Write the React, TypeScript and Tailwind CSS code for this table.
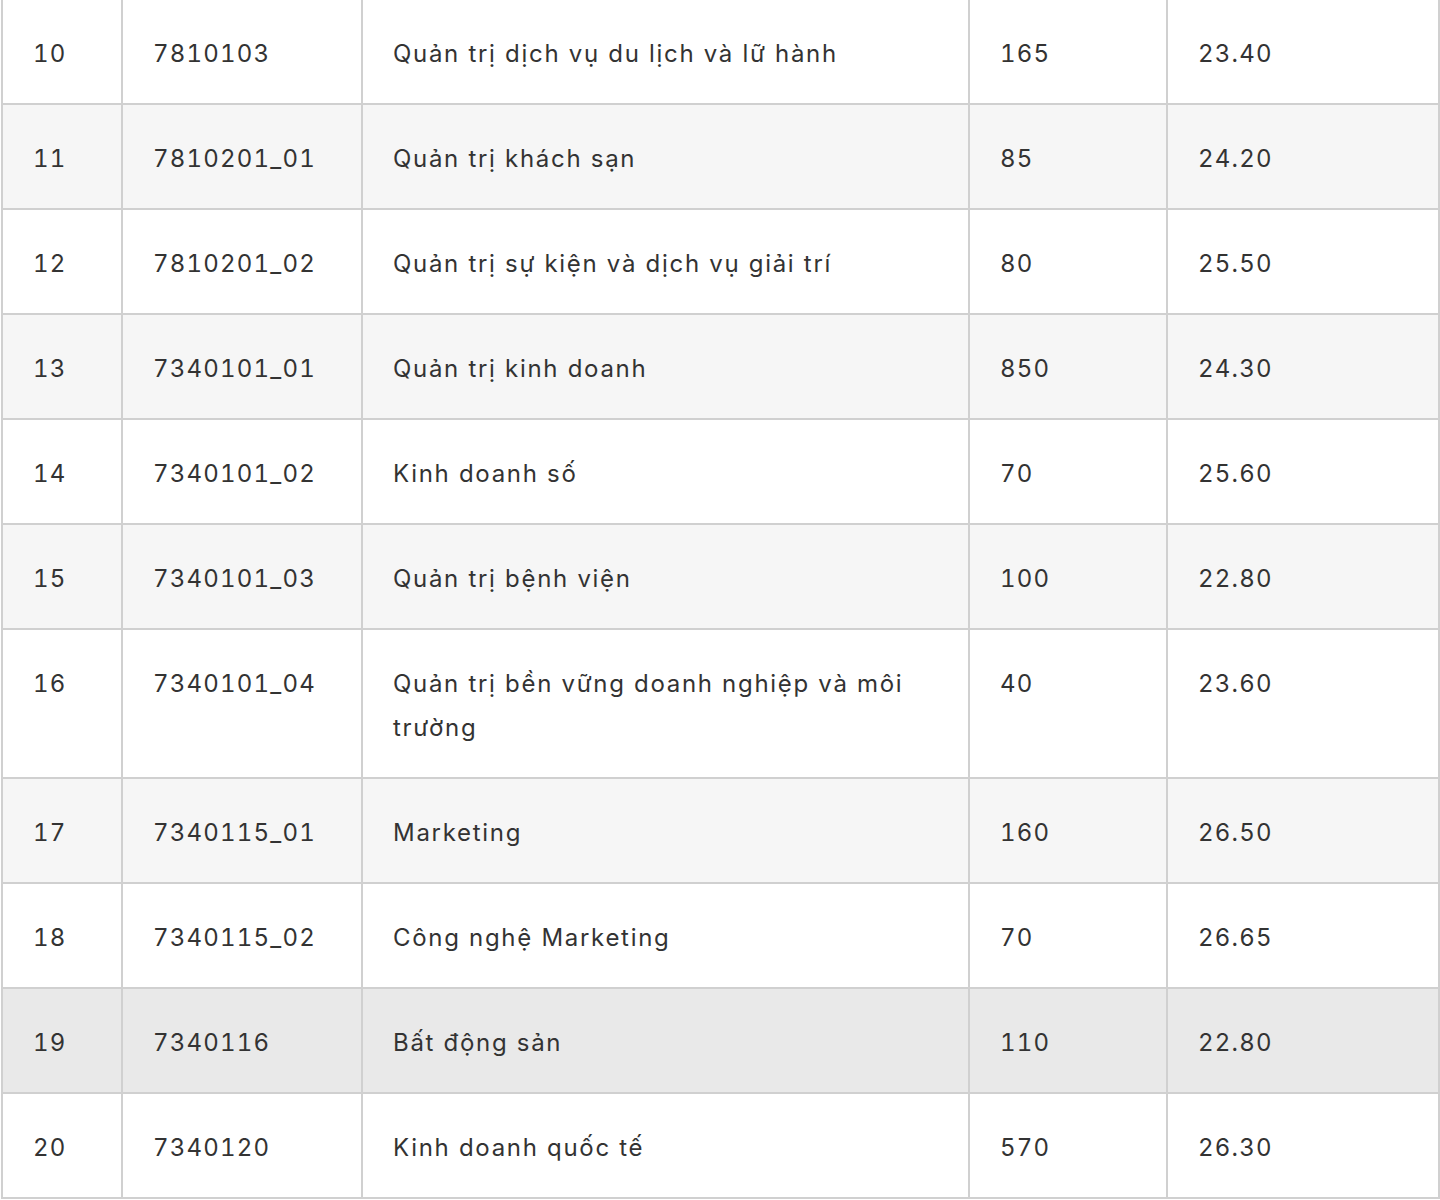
/**
 * Admission quota table — rows 10–20 (major code, name, quota, cut-off score).
 */

type Row = {
  no: number;
  code: string;
  name: string[];
  quota: number;
  score: string;
};

const ROWS: Row[] = [
  { no: 10, code: "7810103", name: ["Quản trị dịch vụ du lịch và lữ hành"], quota: 165, score: "23.40" },
  { no: 11, code: "7810201_01", name: ["Quản trị khách sạn"], quota: 85, score: "24.20" },
  { no: 12, code: "7810201_02", name: ["Quản trị sự kiện và dịch vụ giải trí"], quota: 80, score: "25.50" },
  { no: 13, code: "7340101_01", name: ["Quản trị kinh doanh"], quota: 850, score: "24.30" },
  { no: 14, code: "7340101_02", name: ["Kinh doanh số"], quota: 70, score: "25.60" },
  { no: 15, code: "7340101_03", name: ["Quản trị bệnh viện"], quota: 100, score: "22.80" },
  {
    no: 16,
    code: "7340101_04",
    name: ["Quản trị bền vững doanh nghiệp và môi", "trường"],
    quota: 40,
    score: "23.60",
  },
  { no: 17, code: "7340115_01", name: ["Marketing"], quota: 160, score: "26.50" },
  { no: 18, code: "7340115_02", name: ["Công nghệ Marketing"], quota: 70, score: "26.65" },
  { no: 19, code: "7340116", name: ["Bất động sản"], quota: 110, score: "22.80" },
  { no: 20, code: "7340120", name: ["Kinh doanh quốc tế"], quota: 570, score: "26.30" },
];

// row 19 carries the hover tint in the screenshot
const HOVER_ROW = 19;

function rowBg(i: number, no: number) {
  if (no === HOVER_ROW) return "bg-[#e9e9e9]";
  return i % 2 === 1 ? "bg-[#f6f6f6]" : "bg-white";
}

const cell =
  "border-r-2 border-b-2 border-[#d0d0d0] pl-[30px] pr-[20px] pt-[32px] pb-[27px] whitespace-nowrap";

export default function App() {
  return (
    <div
      className="min-h-screen bg-white pl-[1px] text-[24px] leading-[44px] tracking-[1.2px] text-[#333333]"
      style={{ fontFamily: "Inter, 'Noto Sans', 'Liberation Sans', sans-serif" }}
    >
      <div className="grid w-[1439px] grid-cols-[120px_240px_607px_198px_272px] border-l-2 border-[#d0d0d0]">
        {ROWS.map((r, i) => {
          const bg = rowBg(i, r.no);
          return (
            <div key={r.no} className="contents">
              <div className={`${cell} ${bg} tabular-nums`}>{r.no}</div>
              <div className={`${cell} ${bg} tabular-nums`}>{r.code}</div>
              <div className={`${cell} ${bg} tracking-[1.7px]`}>
                {r.name.map((line, k) => (
                  <div key={k}>{line}</div>
                ))}
              </div>
              <div className={`${cell} ${bg} tabular-nums`}>{r.quota}</div>
              <div className={`${cell} ${bg} tabular-nums`}>{r.score}</div>
            </div>
          );
        })}
      </div>
    </div>
  );
}
